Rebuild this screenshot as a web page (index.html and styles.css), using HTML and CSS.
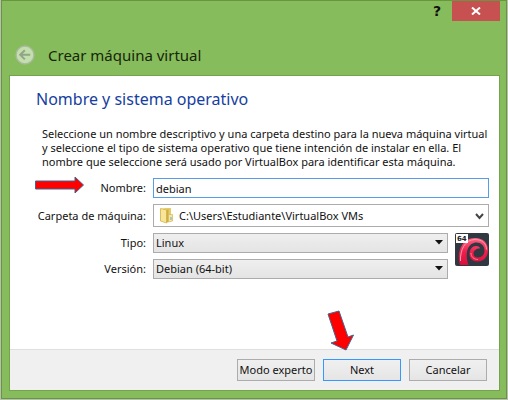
FILE: index.html
```html
<!DOCTYPE html>
<html lang="es">
<head>
<meta charset="utf-8">
<title>Crear máquina virtual</title>
<link rel="stylesheet" href="styles.css">
</head>
<body>
<main class="window">
  <header class="titlebar">
    <div class="window-controls">
      <button class="help" type="button" aria-label="Ayuda">?</button>
      <button class="close" type="button" aria-label="Cerrar">
        <svg width="10" height="8" viewBox="0 0 10 8"><path d="M1 0.5L9 7.5M9 0.5L1 7.5" stroke="#fff" stroke-width="2" fill="none"/></svg>
      </button>
    </div>
    <div class="title-row">
      <button class="back" type="button" aria-label="Atrás" disabled>
        <svg width="20" height="20" viewBox="0 0 20 20"><circle cx="10" cy="10" r="9" fill="#c3dfae" stroke="#a9b99c" stroke-width="1.4"/><path d="M15.2 9.8H5.6M9.8 5.2L5.2 9.8l4.6 4.6" fill="none" stroke="#94a487" stroke-width="2"/></svg>
      </button>
      <h1>Crear máquina virtual</h1>
    </div>
  </header>
  <form class="panel">
    <section class="page">
      <h2>Nombre y sistema operativo</h2>
      <p>Seleccione un nombre descriptivo y una carpeta destino para la nueva máquina virtual<br>y seleccione el tipo de sistema operativo que tiene intención de instalar en ella. El<br>nombre que seleccione será usado por VirtualBox para identificar esta máquina.</p>
      <div class="fields">
        <label for="name">Nombre:</label>
        <input class="wide field name" id="name" type="text" value="debian">
        <label for="folder">Carpeta de máquina:</label>
        <div class="wide select-box">
          <select class="field folder" id="folder"><option>C:\Users\Estudiante\VirtualBox VMs</option></select>
          <svg class="folder-icon" width="15" height="17" viewBox="0 0 15 17"><path d="M1 2l5-1v14l-5-1z" fill="#e9cf6b"/><path d="M6 1h6v8l-3 6H6z" fill="#e6cb6a"/><path d="M1.500 1.500L7.500 3v13l-6-2z" fill="#f7e59b" stroke="#d5b650" stroke-width=".8"/><path d="M7.500 3l2-1v13l-2 1z" fill="#cfae43"/><path d="M9.500 7.500h4V14l-4 1z" fill="#f4e5a6" stroke="#d5b650" stroke-width=".7"/><path d="M12 10v3" stroke="#6ba8cb"/></svg>
          <svg class="mark" width="9" height="7" viewBox="0 0 9 7"><path d="M1 1l3.500 4L8 1" fill="none" stroke="#454545" stroke-width="2"/></svg>
        </div>
        <label for="type">Tipo:</label>
        <div class="select-box">
          <select class="field shaded" id="type"><option>Linux</option></select>
          <svg class="mark" width="8" height="5" viewBox="0 0 8 5"><path d="M0 0h8L4 4.500z" fill="#111"/></svg>
        </div>
        <svg class="os-icon" width="34" height="33" viewBox="0 0 34 33" role="img" aria-label="Debian 64 bits">
          <defs><linearGradient id="swirl" x1="0" y1="0" x2="0" y2="1"><stop offset="0" stop-color="#ff6583"/><stop offset=".5" stop-color="#ee204d"/><stop offset="1" stop-color="#d80f3b"/></linearGradient></defs>
          <rect width="34" height="33" rx="2" fill="#303842"/>
          <path d="M5 32C1 16 9 5 20 5c8.500 0 13 5.500 13 12 0 7-4.500 11.500-10.500 11.500-5 0-8-3.500-8-7.500 0-4.500 3-8 6.500-8 2.500 0 4 1 4 2.500-3.500 0-6.500 2-6.500 5 0 2.500 2 4 4.500 4 4 0 6.500-3 6.500-7 0-5-3.500-8-8-8C14 9.500 9 18 13.500 32z" fill="url(#swirl)"/>
          <path d="M5.500 28C5 17 10 6.500 20 6.500c7 0 11.500 4 11.500 10" fill="none" stroke="#ff9aae"/>
          <path d="M16 20c0 4 3 6.500 7 6.500" fill="none" stroke="#ff7d97"/>
          <path d="M1 1h12v9H1z" fill="#fff"/>
          <text x="2" y="8" class="bits">64</text>
        </svg>
        <label for="version">Versión:</label>
        <div class="select-box">
          <select class="field shaded" id="version"><option>Debian (64-bit)</option></select>
          <svg class="mark" width="8" height="5" viewBox="0 0 8 5"><path d="M0 0h8L4 4.500z" fill="#111"/></svg>
        </div>
      </div>
    </section>
    <footer>
      <button type="button">Modo experto</button>
      <button class="next" type="button">Next</button>
      <button type="button">Cancelar</button>
    </footer>
  </form>
  <svg class="pointer pointer-name" width="50" height="18" viewBox="0 0 50 18"><path d="M.5 5H40V1l8.500 8L40 17v-4H.5z" fill="#fe0000" stroke="#41658f"/></svg>
  <svg class="pointer pointer-next" width="28" height="42" viewBox="0 0 28 42"><path d="M1 4L12 1l9 26 5.500-2L19 40 4 33l6-2z" fill="#fe0000" stroke="#41658f"/></svg>
</main>
</body>
</html>
```
FILE: styles.css
```css
* {
  box-sizing: border-box;
}

body {
  margin: 0;
  background: #b9bfb4;
  color: #111;
  font: 11px/14px "Noto Sans", sans-serif;
}

.window {
  position: relative;
  display: flex;
  flex-direction: column;
  min-height: calc(100vh - 1px);
  margin: 0 1px 1px;
  padding: 0 6px 7px 7px;
  border: 1px solid #68953f;
  background: #86bc5b;
}

button,
input,
select {
  font: inherit;
  color: inherit;
}

.window-controls {
  display: flex;
  justify-content: flex-end;
}

.window-controls button,
.back {
  display: grid;
  place-items: center;
  padding: 0;
  border: 0;
  background: none;
}

.window-controls .help {
  width: 30px;
  height: 20px;
  font: bold 14px/20px "DejaVu Sans", sans-serif;
}

.window-controls .close {
  width: 48px;
  height: 20px;
  background: #c75050;
}

.title-row {
  display: flex;
  align-items: center;
  gap: 13px;
  height: 54px;
  padding: 14px 0 0 6px;
}

h1,
h2,
p {
  margin: 0;
}

h1 {
  color: #17260b;
  font: 15px/20px "Noto Sans", sans-serif;
}

.panel {
  display: flex;
  flex: 1;
  flex-direction: column;
  border: 1px solid #74a24d;
  background: #fff;
}

.page {
  flex: 1;
  padding: 12px 10px 12px 26px;
}

h2 {
  color: #1640a0;
  font: 16px/22px "Noto Sans", sans-serif;
}

p {
  margin: 17px 0 9px 6px;
  white-space: nowrap;
}

.fields {
  display: grid;
  grid-template-columns: 110px 1fr 34px;
  gap: 6px 7px;
  align-items: center;
}

label {
  text-align: right;
}

.wide {
  grid-column: span 2;
}

.select-box {
  position: relative;
  display: grid;
}

.field {
  width: 100%;
  min-width: 0;
  height: 20px;
  margin: 0;
  padding: 0 2px;
  border: 1px solid #acacac;
  border-radius: 0;
  background: #fff;
  appearance: none;
}

.name {
  border-color: #569de5;
}

.folder {
  height: 23px;
  padding-left: 25px;
}

.shaded {
  background: linear-gradient(#efefef, #e4e4e4);
}

.folder-icon,
.mark {
  position: absolute;
  pointer-events: none;
}

.folder-icon {
  top: 3px;
  left: 6px;
}

.mark {
  top: calc(50% - 3px);
  right: 5px;
}

.os-icon {
  grid-row: 3 / span 2;
  grid-column: 3;
  align-self: start;
}

.bits {
  font: bold 7px "DejaVu Sans", sans-serif;
  fill: #222;
}

footer {
  display: flex;
  justify-content: flex-end;
  gap: 8px;
  padding: 9px 12px 9px;
  border-top: 1px solid #dfdfdf;
  background: #f0f0f0;
}

footer button {
  width: 78px;
  height: 22px;
  padding: 0;
  border: 1px solid #acacac;
  background: linear-gradient(#f0f0f0, #e5e5e5);
  white-space: nowrap;
}

footer .next {
  border-color: #3399ff;
}

.pointer {
  position: absolute;
  pointer-events: none;
}

.pointer-name {
  top: 175px;
  left: 33px;
}

.pointer-next {
  right: 151px;
  bottom: 46px;
}
```
